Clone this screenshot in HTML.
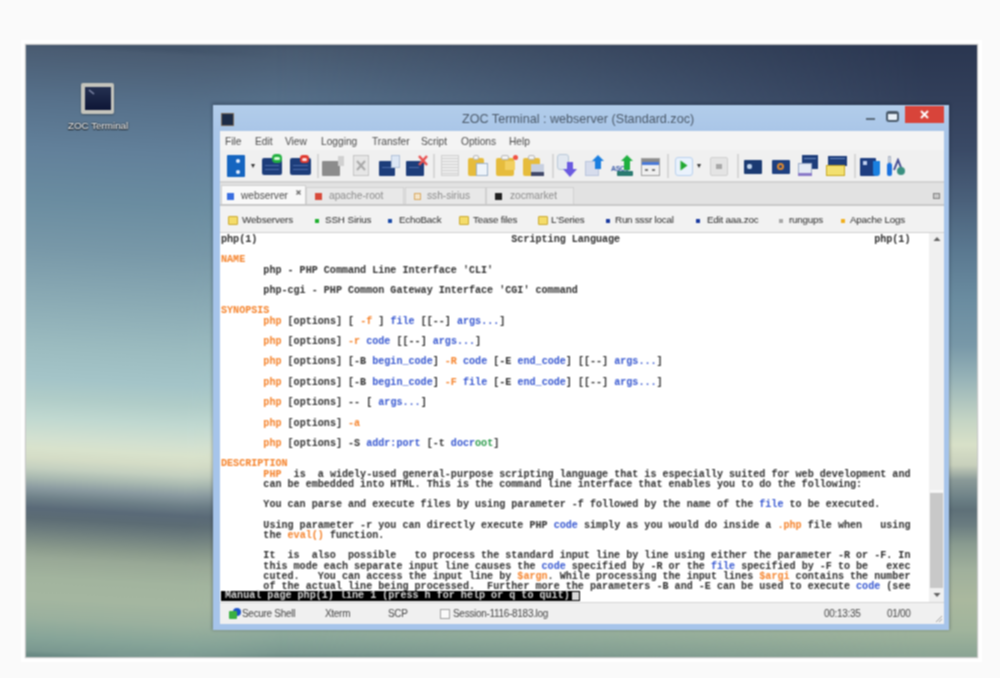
<!DOCTYPE html>
<html><head><meta charset="utf-8">
<style>
*{margin:0;padding:0;box-sizing:border-box}
html,body{width:1000px;height:678px;overflow:hidden;background:#fafafa;font-family:"Liberation Sans",sans-serif}
.abs{position:absolute}
#root{position:absolute;left:0;top:0;width:1000px;height:678px;overflow:hidden;filter:url(#bl)}
#desk{position:absolute;left:26px;top:45px;width:951px;height:612px;overflow:hidden;
 background:linear-gradient(180deg,#42546a 0px,#4a5c72 5px,#56708a 55px,#62809a 105px,#6a8ca0 155px,#7898a8 205px,#8aaab4 255px,#9cbcc0 305px,#a4c4c8 335px,#b0ccc8 355px,#c0d8d0 375px,#d2e0d0 395px,#d8e2cc 405px,#d4dcc6 415px,#c4d0c0 425px,#a8b8b0 435px,#8a9aa0 445px,#6e8088 455px,#5a6a78 465px,#5c6c74 475px,#6a7a7c 485px,#7a8a84 495px,#8a9a8c 505px,#98a896 515px,#a2b49e 535px,#a4b6a0 555px,#9ab09e 575px,#86a498 595px,#7a9890 608px,#6a8a84 612px);
 box-shadow:0 0 1px 1px rgba(0,0,0,.22),0 0 0 5px #fff}
#deskL{position:absolute;left:-10px;top:-30px;width:280px;height:672px;-webkit-mask-image:linear-gradient(90deg,#000 0px,#000 170px,transparent 270px);background:linear-gradient(180deg,#42546a 30px,#4a5c72 35px,#56708a 85px,#62809a 135px,#6a8ca0 185px,#7898a8 235px,#8aaab4 285px,#9cbcc0 335px,#a4c4c8 365px,#b0ccc8 385px,#c0d8d0 405px,#d2e0d0 425px,#d8e2cc 435px,#d4dcc6 445px,#c4d0c0 455px,#a8b8b0 465px,#8a9aa0 475px,#6e8088 485px,#5a6a78 495px,#5c6c74 505px,#6a7a7c 515px,#7a8a84 525px,#8a9a8c 535px,#98a896 545px,#a2b49e 565px,#a4b6a0 585px,#9ab09e 605px,#86a498 625px,#7a9890 638px,#6a8a84 642px);transform:skewY(3deg);transform-origin:60px 30px}
#deskR{position:absolute;left:0;top:0;width:951px;height:612px;
 background:linear-gradient(180deg,#2a3650 0px,#323f5a 55px,#3a4a66 105px,#4a607a 155px,#5a7890 205px,#6a8ca0 255px,#7898a8 300px,#98b4b8 335px,#c4d4c4 375px,#d8e0c8 400px,#c8d0bc 420px,#8a9a98 435px,#6a7e84 455px,#5e7078 465px,#6a7c80 480px,#8a9c90 500px,#a0b09c 525px,#aab89e 555px,#a0b49c 585px,#8aa494 612px);
 -webkit-mask-image:linear-gradient(90deg,transparent 0px,transparent 250px,#000 900px)}
#win{position:absolute;left:213px;top:105px;width:736px;height:525px;background:linear-gradient(#b2cdea,#aac6e8 25px,#a6c4ea 60px,#a6c4ea);box-shadow:0 -1px 3px 1px rgba(10,20,40,.28)}
#title{position:absolute;left:248px;top:111px;width:500px;font-size:12px;color:#3a4a5a}
#close{position:absolute;left:905px;top:106px;width:39px;height:17px;background:#d8443a}
#content{position:absolute;left:220px;top:131px;width:724px;height:493px;background:#f0f0f0}
#menu{position:absolute;left:220px;top:131px;width:724px;height:19px;background:#f4f4f4;font-size:10.2px;color:#4a4a4a}
#menu span{position:absolute;top:5px}
#tool{position:absolute;left:220px;top:150px;width:724px;height:32px;background:#f0f0f0}
#tabs{position:absolute;left:220px;top:181px;width:724px;height:24px;background:#e2e2e2;border-top:2px solid #d2d2d2}
#bm{position:absolute;left:220px;top:205px;width:724px;height:28px;background:#f2f2f2;border-top:1px solid #d8d8d8;font-size:10px;color:#444}
#term{position:absolute;left:220px;top:233px;width:710px;height:369px;background:#fff;overflow:hidden}
#sb{position:absolute;left:929px;top:233px;width:15px;height:369px;background:#f0f0f0}
#status{position:absolute;left:220px;top:602px;width:724px;height:22px;border-top:1px solid #d4d4d4;background:#f0f0f0;font-size:10px;color:#444}
pre{font-family:"Liberation Mono",monospace;font-size:10.08px;line-height:10.21px;color:#2e2e2e;font-weight:bold}
.o{color:#f5822a}.b{color:#3556d0}.g{color:#2a9a4a}
</style></head><body>
<svg width="0" height="0" style="position:absolute"><filter id="bl" x="0" y="0" width="100%" height="100%" color-interpolation-filters="sRGB"><feConvolveMatrix order="3" kernelMatrix="1 2 1 2 4 2 1 2 1" divisor="16" edgeMode="duplicate"/></filter></svg>
<div id="root">
<div id="desk"><div id="deskL"></div><div id="deskR"></div></div>
<div id="win"></div>
<div id="close"><svg width="39" height="17" style="position:absolute;left:0;top:0"><path d="M16 5 L23 12 M23 5 L16 12" stroke="#fff" stroke-width="2"/></svg></div>
<div class="abs" style="left:221px;top:113px;width:13px;height:13px;background:#1c2c48;border:1px solid #7a6a5a"></div>
<div class="abs" style="left:462px;top:112px;font-size:12.6px;color:#4a5868;white-space:nowrap">ZOC Terminal : webserver (Standard.zoc)</div>
<div class="abs" style="left:866px;top:118px;width:9px;height:2px;background:#5a6a7a"></div>
<div class="abs" style="left:886px;top:111px;width:13px;height:11px;border:2px solid #4a5a6a;border-top-width:3px;border-radius:3px;background:#e8f0f8"></div>
<div id="content"></div>
<div id="menu"><span style="left:5px">File</span><span style="left:35px">Edit</span><span style="left:65px">View</span><span style="left:101px">Logging</span><span style="left:152px">Transfer</span><span style="left:201px">Script</span><span style="left:241px">Options</span><span style="left:289px">Help</span></div>
<div id="tool"></div>
<!--TOOL-->
<div class="abs" style="left:227px;top:155px;width:18px;height:22px;background:#1565c0;border-radius:1px"></div>
<div class="abs" style="left:236px;top:159px;width:4px;height:4px;background:#e8f0ff;border-radius:2px"></div>
<div class="abs" style="left:236px;top:170px;width:4px;height:4px;background:#e8f0ff;border-radius:2px"></div>
<div class="abs" style="left:251px;top:164px;width:0;height:0;border-left:2.5px solid transparent;border-right:2.5px solid transparent;border-top:4px solid #333"></div>
<div class="abs" style="left:262px;top:158px;width:20px;height:17px;background:#1d3d7a;border-radius:2px"></div>
<div class="abs" style="left:265px;top:165px;width:14px;height:1px;background:#4a6aa8;"></div>
<div class="abs" style="left:265px;top:169px;width:14px;height:1px;background:#4a6aa8;"></div>
<div class="abs" style="left:272px;top:154px;width:10px;height:9px;background:#22b040;border-radius:4px"></div>
<div class="abs" style="left:274px;top:157px;width:6px;height:3px;background:#d8ffd8;border-radius:2px"></div>
<div class="abs" style="left:290px;top:158px;width:21px;height:17px;background:#1d3d7a;border-radius:2px"></div>
<div class="abs" style="left:293px;top:165px;width:15px;height:1px;background:#4a6aa8;"></div>
<div class="abs" style="left:293px;top:169px;width:15px;height:1px;background:#4a6aa8;"></div>
<div class="abs" style="left:300px;top:155px;width:9px;height:8px;background:#e03a30;border-radius:3px"></div>
<div class="abs" style="left:302px;top:158px;width:5px;height:3px;background:#ffe0e0;border-radius:2px"></div>
<div class="abs" style="left:317px;top:154px;width:2px;height:24px;background:#d6d6d6;"></div>
<div class="abs" style="left:322px;top:161px;width:18px;height:15px;background:#8c8c8c;border-radius:1px"></div>
<div class="abs" style="left:338px;top:156px;width:6px;height:10px;background:#d0d0d0;"></div>
<div class="abs" style="left:353px;top:155px;width:16px;height:21px;background:#e6e6e6;border:1px solid #c4c4c4"></div>
<svg class="abs" style="left:353px;top:155px" width="16" height="21"><path d="M4 6 L12 15 M12 6 L4 15" stroke="#a8a8a8" stroke-width="2"/></svg>
<div class="abs" style="left:379px;top:161px;width:16px;height:15px;background:#1d3d7a;border-radius:1px"></div>
<div class="abs" style="left:382px;top:167px;width:10px;height:1px;background:#4a6aa8;"></div>
<div class="abs" style="left:391px;top:155px;width:9px;height:13px;background:#dce6f4;border:1px solid #b0c0d8"></div>
<div class="abs" style="left:406px;top:161px;width:18px;height:15px;background:#1d3d7a;border-radius:1px"></div>
<div class="abs" style="left:409px;top:167px;width:10px;height:1px;background:#4a6aa8;"></div>
<svg class="abs" style="left:417px;top:154px" width="12" height="13"><path d="M2 2 L10 11 M10 2 L2 11" stroke="#e85050" stroke-width="2.5"/></svg>
<div class="abs" style="left:433px;top:154px;width:2px;height:24px;background:#d6d6d6;"></div>
<div class="abs" style="left:441px;top:155px;width:18px;height:21px;background:repeating-linear-gradient(#ececec 0 2px,#d2d2d2 2px 3px);border:1px solid #d0d0d0"></div>
<div class="abs" style="left:468px;top:158px;width:16px;height:18px;background:#e6bc3c;border-radius:2px"></div>
<div class="abs" style="left:473px;top:155px;width:6px;height:5px;background:#f4f4f4;border:1px solid #b8b8b8;border-radius:2px"></div>
<div class="abs" style="left:496px;top:158px;width:18px;height:18px;background:#e6bc3c;border-radius:2px"></div>
<div class="abs" style="left:501px;top:155px;width:8px;height:5px;background:#f4f4f4;border:1px solid #b8b8b8;border-radius:2px"></div>
<div class="abs" style="left:523px;top:158px;width:17px;height:18px;background:#e6bc3c;border-radius:2px"></div>
<div class="abs" style="left:528px;top:155px;width:7px;height:5px;background:#f4f4f4;border:1px solid #b8b8b8;border-radius:2px"></div>
<div class="abs" style="left:476px;top:163px;width:12px;height:13px;background:#eef4fa;border:1px solid #9ab0c8"></div>
<div class="abs" style="left:505px;top:161px;width:10px;height:9px;background:#f2d060;"></div>
<div class="abs" style="left:513px;top:155px;width:5px;height:5px;background:#f05040;border-radius:3px"></div>
<div class="abs" style="left:531px;top:164px;width:13px;height:12px;background:#c8d0e0;"></div>
<div class="abs" style="left:531px;top:172px;width:13px;height:4px;background:#404868;"></div>
<div class="abs" style="left:552px;top:154px;width:2px;height:24px;background:#d6d6d6;"></div>
<div class="abs" style="left:557px;top:154px;width:12px;height:16px;background:#e2e8f0;border:1px solid #b8c8d8;border-radius:3px"></div>
<svg class="abs" style="left:563px;top:162px" width="14" height="16"><path d="M4 0 H10 V7 H14 L7 15 L0 7 H4 Z" fill="#6a5ae0"/></svg>
<div class="abs" style="left:585px;top:161px;width:14px;height:15px;background:#d6dcec;border:1px solid #b8c4dc"></div>
<svg class="abs" style="left:592px;top:155px" width="12" height="14"><path d="M6 0 L12 6 H9 V14 H3 V6 H0 Z" fill="#1a7ee0"/></svg>
<div class="abs" style="left:611px;top:165px;font:bold 7px 'Liberation Sans',sans-serif;color:#3a5aa8;letter-spacing:-0.3px">ASCII</div>
<div class="abs" style="left:617px;top:171px;width:16px;height:5px;background:#2a7a70;border-radius:1px"></div>
<svg class="abs" style="left:621px;top:155px" width="12" height="15"><path d="M6 0 L12 6 H9 V15 H3 V6 H0 Z" fill="#20b040"/></svg>
<div class="abs" style="left:641px;top:158px;width:19px;height:18px;background:#f0f0f0;border:1px solid #a0a0a0"></div>
<div class="abs" style="left:642px;top:159px;width:17px;height:3px;background:#8a8a8a;"></div>
<div class="abs" style="left:642px;top:162px;width:17px;height:3px;background:#4a7ad8;"></div>
<div class="abs" style="left:645px;top:169px;width:3px;height:2px;background:#777;"></div>
<div class="abs" style="left:652px;top:169px;width:3px;height:2px;background:#777;"></div>
<div class="abs" style="left:667px;top:154px;width:2px;height:24px;background:#d6d6d6;"></div>
<div class="abs" style="left:675px;top:157px;width:18px;height:19px;background:#eaf2fc;border:1px solid #b8d0ee;border-radius:3px"></div>
<svg class="abs" style="left:680px;top:160px" width="8" height="11"><path d="M0.5 0.5 L7.5 5.5 L0.5 10.5 Z" fill="#20a830"/></svg>
<div class="abs" style="left:697px;top:164px;width:0;height:0;border-left:2.5px solid transparent;border-right:2.5px solid transparent;border-top:4px solid #333"></div>
<div class="abs" style="left:710px;top:157px;width:18px;height:19px;background:#e4e4e4;border:1px solid #cfcfcf;border-radius:2px"></div>
<div class="abs" style="left:716px;top:164px;width:6px;height:5px;background:#a8a8a8;"></div>
<div class="abs" style="left:737px;top:154px;width:2px;height:24px;background:#d6d6d6;"></div>
<div class="abs" style="left:744px;top:160px;width:18px;height:14px;background:#1a3a72;border-radius:1px"></div>
<div class="abs" style="left:747px;top:164px;width:5px;height:5px;background:#c0d4ec;border-radius:2px"></div>
<div class="abs" style="left:772px;top:160px;width:18px;height:14px;background:#1e4080;border-radius:1px"></div>
<div class="abs" style="left:777px;top:163px;width:7px;height:7px;background:transparent;border:2px solid #e08a30;border-radius:50%"></div>
<div class="abs" style="left:802px;top:155px;width:16px;height:14px;background:#1d3d7a;"></div>
<div class="abs" style="left:804px;top:158px;width:12px;height:1px;background:#6a8ac0;"></div>
<div class="abs" style="left:798px;top:163px;width:14px;height:13px;background:#e4eaf4;border:1px solid #9aaac8"></div>
<div class="abs" style="left:798px;top:173px;width:14px;height:3px;background:#8a7ac8;"></div>
<div class="abs" style="left:828px;top:156px;width:19px;height:10px;background:#1d3d7a;"></div>
<div class="abs" style="left:830px;top:158px;width:15px;height:1px;background:#6a8ac0;"></div>
<div class="abs" style="left:826px;top:165px;width:19px;height:11px;background:#f2e070;border:1px solid #c8a820"></div>
<div class="abs" style="left:854px;top:154px;width:2px;height:24px;background:#d6d6d6;"></div>
<div class="abs" style="left:860px;top:158px;width:16px;height:18px;background:#1d3d80;border-radius:1px"></div>
<div class="abs" style="left:863px;top:161px;width:4px;height:4px;background:#c0d0f0;"></div>
<div class="abs" style="left:873px;top:161px;width:7px;height:15px;background:#1a80e0;border-radius:0 0 3px 3px"></div>
<div class="abs" style="left:887px;top:163px;width:5px;height:13px;background:#1a72e0;border-radius:2px"></div>
<div class="abs" style="left:888px;top:156px;width:3px;height:7px;background:#e0e6ee;border:1px solid #a8b0c0"></div>
<svg class="abs" style="left:893px;top:158px" width="13" height="18"><path d="M1 12 L5 2 L9 12" stroke="#404890" stroke-width="2" fill="none"/><circle cx="8" cy="13" r="4" fill="#3a9080"/></svg>
<!--/TOOL-->
<div id="tabs"></div>
<div id="bm"></div>
<div id="term"><pre style="position:absolute;left:1px;top:2px">php(1)                                          Scripting Language                                          php(1)

<span class="o">NAME</span>
       php - PHP Command Line Interface &#x27;CLI&#x27;

       php-cgi - PHP Common Gateway Interface &#x27;CGI&#x27; command

<span class="o">SYNOPSIS</span>
       <span class="o">php</span> [options] [ <span class="o">-f</span> ] <span class="b">file</span> [[--] <span class="b">args...</span>]

       <span class="o">php</span> [options] <span class="o">-r</span> <span class="b">code</span> [[--] <span class="b">args...</span>]

       <span class="o">php</span> [options] [-B <span class="b">begin_code</span>] <span class="o">-R</span> <span class="b">code</span> [-E <span class="b">end_code</span>] [[--] <span class="b">args...</span>]

       <span class="o">php</span> [options] [-B <span class="b">begin_code</span>] <span class="o">-F</span> <span class="b">file</span> [-E <span class="b">end_code</span>] [[--] <span class="b">args...</span>]

       <span class="o">php</span> [options] -- [ <span class="b">args...</span>]

       <span class="o">php</span> [options] <span class="o">-a</span>

       <span class="o">php</span> [options] -S <span class="b">addr:port</span> [-t <span class="b">docr</span><span class="g">oot</span>]

<span class="o">DESCRIPTION</span>
       <span class="o">PHP</span>  is  a widely-used general-purpose scripting language that is especially suited for web development and
       can be embedded into HTML. This is the command line interface that enables you to do the following:

       You can parse and execute files by using parameter -f followed by the name of the <span class="b">file</span> to be executed.

       Using parameter -r you can directly execute PHP <span class="b">code</span> simply as you would do inside a <span class="o">.php</span> file when   using
       the <span class="o">eval()</span> function.

       It  is  also  possible   to process the standard input line by line using either the parameter -R or -F. In
       this mode each separate input line causes the <span class="b">code</span> specified by -R or the <span class="b">file</span> specified by -F to be   exec
       cuted.   You can access the input line by <span class="o">$argn</span>. While processing the input lines <span class="o">$argi</span> contains the number
       of the actual line being processed.  Further more the parameters -B and -E can be used to execute <span class="b">code</span> (see</pre></div>
<div id="sb"></div>
<div id="status"></div>
<!--REST-->
<div class="abs" style="left:81px;top:83px;width:33px;height:31px;background:#c4c4bc;border-radius:2px;box-shadow:0 1px 2px rgba(0,0,0,.3)"></div>
<div class="abs" style="left:85px;top:87px;width:26px;height:23px;background:linear-gradient(#243050,#0e1636);"></div>
<svg class="abs" style="left:85px;top:87px" width="26" height="23"><path d="M4 3 L9 7" stroke="#8890b0" stroke-width="1.5"/></svg>
<div class="abs" style="left:68px;top:120px;font-size:9.8px;color:#fff;white-space:nowrap;text-shadow:0 0 2px #000,0 1px 1px #000;letter-spacing:0px">ZOC Terminal</div>
<div class="abs" style="left:221px;top:185px;width:85px;height:21px;background:#f9f9f9;border:1px solid #cfcfcf;border-bottom:none"></div>
<div class="abs" style="left:227px;top:193px;width:7px;height:7px;background:#3a6ee0;"></div>
<div class="abs" style="left:241px;top:190px;font-size:10.2px;color:#4a4a4a;white-space:nowrap;">webserver</div>
<svg class="abs" style="left:296px;top:190px" width="5" height="5"><path d="M0.5 0.5 L4.5 4.5 M4.5 0.5 L0.5 4.5" stroke="#666" stroke-width="1.3"/></svg>
<div class="abs" style="left:306px;top:187px;width:98px;height:18px;background:#e8e8e8;border:1px solid #d0d0d0;border-bottom:none"></div>
<div class="abs" style="left:315px;top:193px;width:7px;height:7px;background:#d84a3a;"></div>
<div class="abs" style="left:329px;top:190px;font-size:10.2px;color:#8a8a8a;white-space:nowrap;">apache-root</div>
<div class="abs" style="left:405px;top:187px;width:81px;height:18px;background:#e8e8e8;border:1px solid #d0d0d0;border-bottom:none"></div>
<div class="abs" style="left:414px;top:193px;width:7px;height:7px;background:#f4e4c8;border:1px solid #d8a860;"></div>
<div class="abs" style="left:427px;top:190px;font-size:10.2px;color:#8a8a8a;white-space:nowrap;">ssh-sirius</div>
<div class="abs" style="left:486px;top:187px;width:88px;height:18px;background:#e8e8e8;border:1px solid #d0d0d0;border-bottom:none"></div>
<div class="abs" style="left:495px;top:193px;width:7px;height:7px;background:#202020;"></div>
<div class="abs" style="left:510px;top:190px;font-size:10.2px;color:#8a8a8a;white-space:nowrap;">zocmarket</div>
<div class="abs" style="left:220px;top:204px;width:724px;height:2px;background:#c8c8c8;"></div>
<div class="abs" style="left:933px;top:193px;width:7px;height:6px;background:#c8c8c8;border:1px solid #808080"></div>
<div class="abs" style="left:228px;top:216px;width:10px;height:9px;background:#f4dc6a;border:1px solid #c8a830;border-radius:1px"></div>
<div class="abs" style="left:242px;top:214px;font-size:9.8px;color:#2a2a2a;white-space:nowrap;letter-spacing:-0.1px">Webservers</div>
<div class="abs" style="left:315px;top:219px;width:4px;height:4px;background:#20b030;"></div>
<div class="abs" style="left:325px;top:214px;font-size:9.8px;color:#2a2a2a;white-space:nowrap;letter-spacing:-0.1px">SSH Sirius</div>
<div class="abs" style="left:388px;top:219px;width:4px;height:4px;background:#1a4aa8;"></div>
<div class="abs" style="left:399px;top:214px;font-size:9.8px;color:#2a2a2a;white-space:nowrap;letter-spacing:-0.2px">EchoBack</div>
<div class="abs" style="left:459px;top:216px;width:10px;height:9px;background:#f4dc6a;border:1px solid #c8a830;border-radius:1px"></div>
<div class="abs" style="left:473px;top:214px;font-size:9.8px;color:#2a2a2a;white-space:nowrap;letter-spacing:-0.2px">Tease files</div>
<div class="abs" style="left:538px;top:216px;width:10px;height:9px;background:#f4dc6a;border:1px solid #c8a830;border-radius:1px"></div>
<div class="abs" style="left:551px;top:214px;font-size:9.8px;color:#2a2a2a;white-space:nowrap;letter-spacing:-0.2px">L'Series</div>
<div class="abs" style="left:606px;top:219px;width:4px;height:4px;background:#1a3aa0;"></div>
<div class="abs" style="left:615px;top:214px;font-size:9.8px;color:#2a2a2a;white-space:nowrap;letter-spacing:-0.2px">Run sssr local</div>
<div class="abs" style="left:696px;top:219px;width:4px;height:4px;background:#1a3aa0;"></div>
<div class="abs" style="left:707px;top:214px;font-size:9.8px;color:#2a2a2a;white-space:nowrap;letter-spacing:-0.2px">Edit aaa.zoc</div>
<div class="abs" style="left:779px;top:219px;width:4px;height:4px;background:#a8a8a8;"></div>
<div class="abs" style="left:789px;top:214px;font-size:9.8px;color:#2a2a2a;white-space:nowrap;letter-spacing:-0.2px">rungups</div>
<div class="abs" style="left:841px;top:219px;width:4px;height:4px;background:#f0b020;"></div>
<div class="abs" style="left:850px;top:214px;font-size:9.8px;color:#2a2a2a;white-space:nowrap;letter-spacing:-0.2px">Apache Logs</div>
<div class="abs" style="left:220px;top:232px;width:724px;height:1px;background:#d0d0d0;"></div>
<div class="abs" style="left:929px;top:233px;width:15px;height:369px;background:#f0f0f0;"></div>
<div class="abs" style="left:930px;top:490px;width:13px;height:2px;background:#f8f8f8;"></div>
<div class="abs" style="left:930px;top:493px;width:13px;height:95px;background:#c8c8c8;"></div>
<svg class="abs" style="left:933px;top:236px" width="8" height="6"><path d="M0.5 5 L4 1 L7.5 5 Z" fill="#606060"/></svg>
<svg class="abs" style="left:933px;top:592px" width="8" height="6"><path d="M0.5 1 L4 5 L7.5 1 Z" fill="#606060"/></svg>
<div class="abs" style="left:221px;top:591px;width:359px;height:10px;background:#000;"></div>
<pre class="abs" style="left:225px;top:591px;color:#d8d8d8;font-weight:bold;line-height:10px">Manual page php(1) line 1 (press h for help or q to quit)</pre>
<div class="abs" style="left:572px;top:592px;width:7px;height:8px;background:#d8d8d8;"></div>
<div class="abs" style="left:233px;top:608px;width:8px;height:8px;background:#1a50c8;border-radius:50%"></div>
<div class="abs" style="left:229px;top:611px;width:8px;height:8px;background:#3ab040;border-radius:1px"></div>
<div class="abs" style="left:242px;top:608px;font-size:10px;color:#444;white-space:nowrap;letter-spacing:-0.3px">Secure Shell</div>
<div class="abs" style="left:325px;top:608px;font-size:10px;color:#444;white-space:nowrap;letter-spacing:-0.3px">Xterm</div>
<div class="abs" style="left:388px;top:608px;font-size:10px;color:#444;white-space:nowrap;letter-spacing:-0.3px">SCP</div>
<div class="abs" style="left:440px;top:609px;width:10px;height:10px;background:#fafafa;border:1px solid #a0a0a0"></div>
<div class="abs" style="left:453px;top:608px;font-size:10px;color:#444;white-space:nowrap;letter-spacing:-0.3px">Session-1116-8183.log</div>
<div class="abs" style="left:824px;top:608px;font-size:10px;color:#444;white-space:nowrap;letter-spacing:-0.3px">00:13:35</div>
<div class="abs" style="left:887px;top:608px;font-size:10px;color:#444;white-space:nowrap;letter-spacing:-0.3px">01/00</div>
<svg class="abs" style="left:934px;top:614px" width="9" height="9"><path d="M8 2 L2 8 M8 5 L5 8" stroke="#a0a0a0" stroke-width="1"/></svg>
<!--/REST-->
</div>
</body></html>
